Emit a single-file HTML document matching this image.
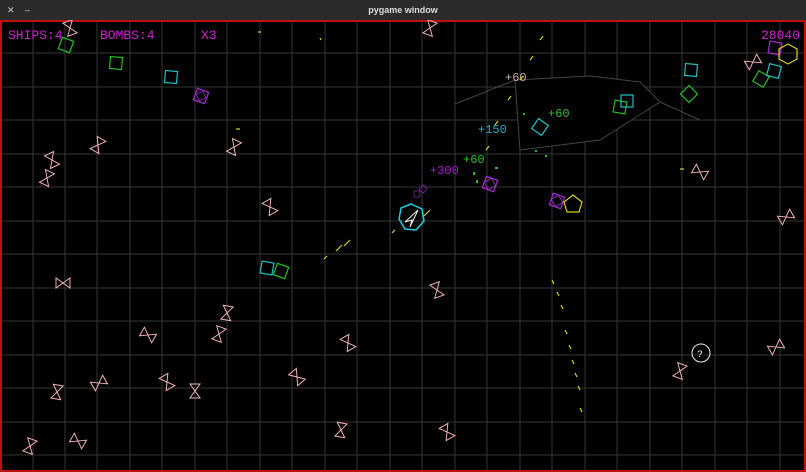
<!DOCTYPE html>
<html><head><style>
html,body{margin:0;padding:0;background:#000;width:806px;height:472px;overflow:hidden}
#tb{position:absolute;left:0;top:0;width:806px;height:20px;background:#2b2b2b;color:#ddd;font:bold 9px "Liberation Sans",sans-serif;text-align:center;line-height:20px}
#tb span{position:absolute;top:0;color:#ccc;font-weight:normal}
svg{position:absolute;left:0;top:20px}
text{font-family:"Liberation Mono",monospace}
</style></head><body>
<div id="tb"><span style="left:7px">✕</span><span style="left:25px">–</span>pygame window</div>
<svg width="806" height="452" viewBox="0 20 806 452">
<defs>
<path id="bf" d="M-5,-7 L5,-7 L-5,7 L5,7 Z" fill="none" stroke="#f0b0c0" stroke-width="1"/>
<rect id="sq" x="-6" y="-6" width="12" height="12" fill="none" stroke-width="1.2"/>
</defs>
<g stroke="#363636" stroke-width="1">
<path d="M33 20V472M65 20V472M97 20V472M130 20V472M162 20V472M195 20V472M227 20V472M260 20V472M292 20V472M325 20V472M357 20V472M390 20V472M422 20V472M455 20V472M487 20V472M520 20V472M552 20V472M585 20V472M617 20V472M650 20V472M682 20V472M715 20V472M747 20V472M780 20V472"/>
<path d="M0 53H806M0 87H806M0 120H806M0 154H806M0 187H806M0 221H806M0 254H806M0 288H806M0 321H806M0 355H806M0 388H806M0 422H806M0 455H806"/>
<path d="M515 80L590 76L640 82L660 102L600 140L520 150M520 150L515 80M515 80L455 104M660 102L700 120" stroke="#444"/>
</g>
<rect x="1" y="21" width="804" height="450" fill="none" stroke="#c01010" stroke-width="2"/>
<g font-size="13" fill="#d020d0">
<text x="8" y="39">SHIPS:4</text><text x="100" y="39">BOMBS:4</text><text x="201" y="39">X3</text>
<text x="800" y="39" text-anchor="end">28040</text>
</g>
<g font-size="12">
<text x="505" y="81" fill="#c8a8a8">+60</text>
<text x="548" y="117" fill="#20c020">+60</text>
<text x="478" y="133" fill="#20b0c0">+150</text>
<text x="463" y="163" fill="#20c020">+60</text>
<text x="430" y="174" fill="#a020d0">+300</text>
</g>
<g>
<use href="#bf" transform="translate(70,28) rotate(-20)"/><use href="#bf" transform="translate(430,28) rotate(20)"/><use href="#bf" transform="translate(98,145) rotate(30)"/><use href="#bf" transform="translate(52,160) rotate(-25)"/><use href="#bf" transform="translate(47,178) rotate(25)"/><use href="#bf" transform="translate(234,147) rotate(25)"/><use href="#bf" transform="translate(270,207) rotate(-30)"/><use href="#bf" transform="translate(700,172) rotate(-60)"/><use href="#bf" transform="translate(786,217) rotate(60)"/><use href="#bf" transform="translate(63,283) rotate(90)"/><use href="#bf" transform="translate(437,290) rotate(-20)"/><use href="#bf" transform="translate(227,313) rotate(10)"/><use href="#bf" transform="translate(148,335) rotate(-60)"/><use href="#bf" transform="translate(219,334) rotate(20)"/><use href="#bf" transform="translate(348,343) rotate(-30)"/><use href="#bf" transform="translate(776,347) rotate(60)"/><use href="#bf" transform="translate(680,371) rotate(20)"/><use href="#bf" transform="translate(99,383) rotate(60)"/><use href="#bf" transform="translate(167,382) rotate(-30)"/><use href="#bf" transform="translate(297,377) rotate(-40)"/><use href="#bf" transform="translate(57,392) rotate(10)"/><use href="#bf" transform="translate(195,391) rotate(0)"/><use href="#bf" transform="translate(341,430) rotate(10)"/><use href="#bf" transform="translate(447,432) rotate(-30)"/><use href="#bf" transform="translate(78,441) rotate(-60)"/><use href="#bf" transform="translate(30,446) rotate(20)"/><use href="#bf" transform="translate(753,62) rotate(60)"/>
</g>
<g stroke="#20c020">
<use href="#sq" transform="translate(66,45) rotate(20)"/><use href="#sq" transform="translate(116,63) rotate(5)"/><use href="#sq" transform="translate(689,94) rotate(45)"/><use href="#sq" transform="translate(620,107) rotate(10)"/><use href="#sq" transform="translate(761,79) rotate(30)"/><use href="#sq" transform="translate(281,271) rotate(20)"/>
</g>
<g stroke="#20c0c8">
<use href="#sq" transform="translate(171,77) rotate(5)"/><use href="#sq" transform="translate(691,70) rotate(5)"/><use href="#sq" transform="translate(627,101)"/><use href="#sq" transform="translate(540,127) rotate(35)"/><use href="#sq" transform="translate(774,71) rotate(15)"/><use href="#sq" transform="translate(267,268) rotate(10)"/>
</g>
<g stroke="#a030d0">
<use href="#sq" transform="translate(201,96) rotate(20)"/><use href="#sq" transform="translate(201,96) rotate(65) scale(.6)"/>
<use href="#sq" transform="translate(490,184) rotate(20)"/><use href="#sq" transform="translate(490,184) rotate(60) scale(.7)"/>
<use href="#sq" transform="translate(557,201) rotate(20)"/><use href="#sq" transform="translate(557,201) rotate(60) scale(.7)"/>
<use href="#sq" transform="translate(775,48) rotate(10)"/>
<use href="#sq" transform="translate(417,194) scale(.5)"/><use href="#sq" transform="translate(423,189) rotate(40) scale(.5)"/>
</g>
<g fill="none" stroke="#d8d020" stroke-width="1.2">
<polygon points="573,195 582,202 579,212 567,212 564,202"/>
<polygon points="788,44 797,49 797,59 788,64 779,59 779,49"/>
<path d="M540 40l3-4M530 60l3-4M520 80l3-4M508 100l3-4M495 125l3-4M486 150l3-4M430 210l-6 6M350 240l-6 6M342 245l-6 6M327 256l-3 3M395 230l-3 3M552 280l2 4M557 292l2 4M561 305l2 4M565 330l2 4M569 345l2 4M572 360l2 4M575 373l2 4M578 386l2 4M580 408l2 4M258 32l3 0M320 38l1 2M680 169l4 0M236 129l4 0"/>
</g>
<g fill="#20c020"><rect x="473" y="172" width="2" height="3"/><rect x="476" y="180" width="2" height="3"/><rect x="495" y="167" width="3" height="2"/><rect x="535" y="150" width="2" height="2"/><rect x="545" y="155" width="2" height="2"/><rect x="523" y="113" width="2" height="2"/></g>
<polygon points="411,204 422,209 424,221 416,230 405,229 399,219 401,208" fill="none" stroke="#20d0e0" stroke-width="1.5"/>
<path d="M418 210L405 222L412 220L410 227Z" fill="none" stroke="#eee"/>
<circle cx="701" cy="353" r="9" fill="none" stroke="#eee"/>
<text x="697" y="357" font-size="10" fill="#eee">?</text>
</svg>
</body></html>
